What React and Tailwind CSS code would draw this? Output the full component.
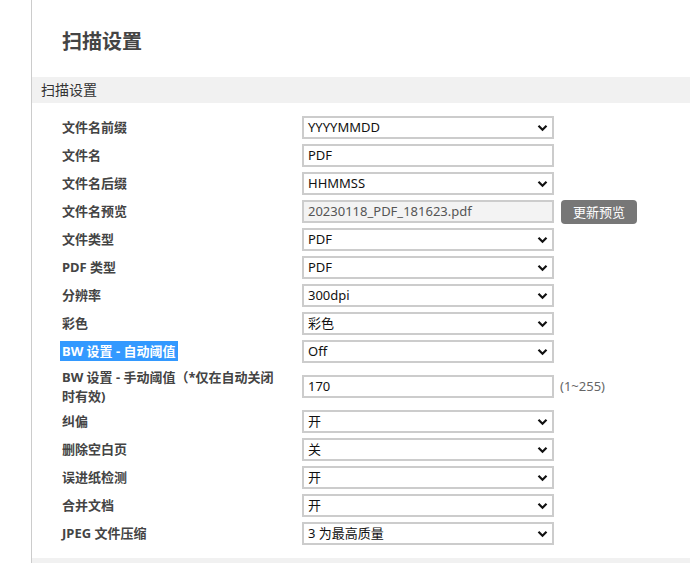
// App.jsx — 扫描设置 page
const FONT = 'font-["Noto_Sans","Noto_Sans_CJK_SC",sans-serif]';

const ROWS = [
  { label: '文件名前缀', type: 'select', value: 'YYYYMMDD' },
  { label: '文件名', type: 'input', value: 'PDF' },
  { label: '文件名后缀', type: 'select', value: 'HHMMSS' },
  { label: '文件名预览', type: 'preview', value: '20230118_PDF_181623.pdf' },
  { label: '文件类型', type: 'select', value: 'PDF' },
  { label: 'PDF 类型', type: 'select', value: 'PDF' },
  { label: '分辨率', type: 'select', value: '300dpi' },
  { label: '彩色', type: 'select', value: '彩色' },
  { label: 'BW 设置 - 自动阈值', type: 'select', value: 'Off', selected: true },
  { label: 'BW 设置 - 手动阈值（*仅在自动关闭', label2: '时有效)', type: 'range', value: '170' },
  { label: '纠偏', type: 'select', value: '开' },
  { label: '删除空白页', type: 'select', value: '关' },
  { label: '误进纸检测', type: 'select', value: '开' },
  { label: '合并文档', type: 'select', value: '开' },
  { label: 'JPEG 文件压缩', type: 'select', value: '3 为最高质量' },
];

function Chevron() {
  return (
    <svg width="11" height="8" viewBox="0 0 11 8" className="absolute right-[6px] top-1/2 -translate-y-1/2 pointer-events-none">
      <path d="M1.5 1.8 L5.5 5.8 L9.5 1.8" fill="none" stroke="#111" strokeWidth="2.2" />
    </svg>
  );
}

function Control({ row }) {
  const box = 'w-[252px] h-[23px] border-2 border-[#ccc] px-[4px] text-[13px] text-[#111] leading-[19px] outline-none';
  if (row.type === 'select') {
    return (
      <div className="relative w-[252px]">
        <div className={box + ' bg-white'}>{row.value}</div>
        <Chevron />
      </div>
    );
  }
  if (row.type === 'preview') {
    return (
      <div className="flex items-center gap-[7px]">
        <div className={box + ' bg-[#f3f3f3] !text-[#555]'}>{row.value}</div>
        <button className="h-[24px] px-[12px] rounded-[4px] bg-[#777] text-white text-[13px] leading-[24px]">更新预览</button>
      </div>
    );
  }
  if (row.type === 'range') {
    return (
      <div className="flex items-center gap-[6px]">
        <div className={box + ' bg-white'}>{row.value}</div>
        <span className="text-[13px] text-[#666]">(1~255)</span>
      </div>
    );
  }
  return <div className={box + ' bg-white'}>{row.value}</div>;
}

export default function App() {
  return (
    <div className={'flex min-h-[563px] bg-white ' + FONT}>
      <div className="w-[32px] shrink-0 border-r border-[#ccc]" />
      <div className="flex-1 flex flex-col">
        <div className="h-[77px] pl-[30px] pt-[27px]">
          <h1 className="text-[20px] font-bold text-[#444] leading-[30px]">扫描设置</h1>
        </div>
        <div className="h-[26px] bg-[#f1f1f1] pl-[9px] text-[14px] text-[#333] leading-[26px]">扫描设置</div>

        <div className="flex flex-col gap-[5px] pl-[28px] pt-[13px] pb-[13px]">
          {ROWS.map((row) => (
            <div key={row.label} className={'flex items-center ' + (row.label2 ? 'h-[37px]' : 'h-[23px]')}>
              <div className="w-[242px] shrink-0 text-[13px] font-bold text-[#444] leading-[19px]">
                {row.selected ? (
                  <span className="bg-[#3399ff] text-white py-[1px] px-[2px]">{row.label}</span>
                ) : (
                  <span className="px-[2px] block">
                    {row.label}
                    {row.label2 && <><br />{row.label2}</>}
                  </span>
                )}
              </div>
              <Control row={row} />
            </div>
          ))}
        </div>
        <div className="flex-1 bg-[#f1f1f1] min-h-[5px]" />
      </div>
    </div>
  );
}
